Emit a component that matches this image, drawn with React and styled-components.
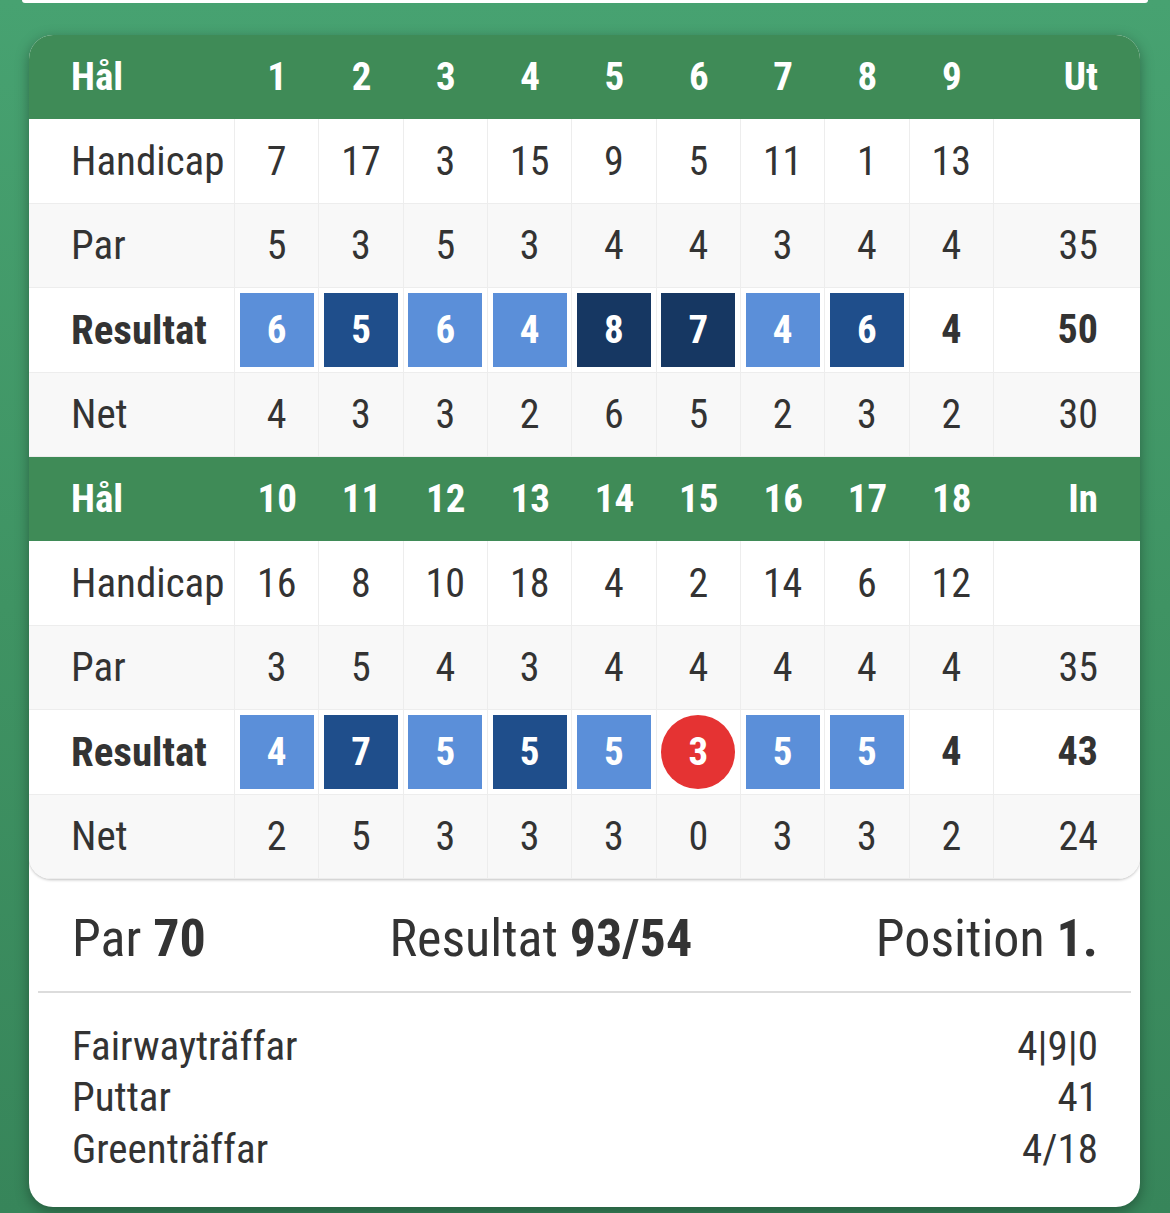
import React from 'react'
import styled, { createGlobalStyle } from 'styled-components'

const front = {
  title: 'Ut',
  holes: [1, 2, 3, 4, 5, 6, 7, 8, 9],
  hcp: [7, 17, 3, 15, 9, 5, 11, 1, 13],
  par: [5, 3, 5, 3, 4, 4, 3, 4, 4],
  res: [6, 5, 6, 4, 8, 7, 4, 6, 4],
  net: [4, 3, 3, 2, 6, 5, 2, 3, 2],
  totals: { par: 35, res: 50, net: 30 },
}

const back = {
  title: 'In',
  holes: [10, 11, 12, 13, 14, 15, 16, 17, 18],
  hcp: [16, 8, 10, 18, 4, 2, 14, 6, 12],
  par: [3, 5, 4, 3, 4, 4, 4, 4, 4],
  res: [4, 7, 5, 5, 5, 3, 5, 5, 4],
  net: [2, 5, 3, 3, 3, 0, 3, 3, 2],
  totals: { par: 35, res: 43, net: 24 },
}

const stats = [
  ['Fairwayträffar', '4|9|0'],
  ['Puttar', '41'],
  ['Greenträffar', '4/18'],
]

const scoreKind = (res, par) => {
  const d = res - par
  if (d < 0) return 'birdie'
  if (d === 0) return 'par'
  if (d === 1) return 'bogey'
  if (d === 2) return 'double'
  return 'worse'
}

const Half = ({ data }) => (
  <>
    <HeadCell label>Hål</HeadCell>
    {data.holes.map((h) => (
      <HeadCell key={h}>{h}</HeadCell>
    ))}
    <HeadCell total>{data.title}</HeadCell>

    <Label>Handicap</Label>
    {data.hcp.map((v, i) => (
      <Cell key={i}>{v}</Cell>
    ))}
    <Cell total />

    <Label shade>Par</Label>
    {data.par.map((v, i) => (
      <Cell shade key={i}>
        {v}
      </Cell>
    ))}
    <Cell shade total>
      {data.totals.par}
    </Cell>

    <Label bold>Resultat</Label>
    {data.res.map((v, i) => {
      const kind = scoreKind(v, data.par[i])
      return (
        <Cell key={i} bold>
          {kind === 'par' ? v : <Score kind={kind}>{v}</Score>}
        </Cell>
      )
    })}
    <Cell total bold>
      {data.totals.res}
    </Cell>

    <Label shade>Net</Label>
    {data.net.map((v, i) => (
      <Cell shade key={i}>
        {v}
      </Cell>
    ))}
    <Cell shade total>
      {data.totals.net}
    </Cell>
  </>
)

const App = () => {
  return (
    <Page>
      <GlobalStyle />
      <TopStrip />
      <Card>
        <Table>
          <Half data={front} />
          <Half data={back} />
        </Table>
        <Summary>
          <SumItem>
            Par <b>70</b>
          </SumItem>
          <SumItem>
            Resultat <b>93/54</b>
          </SumItem>
          <SumItem>
            Position <b>1.</b>
          </SumItem>
        </Summary>
        <Divider />
        <Stats>
          {stats.map(([k, v]) => (
            <StatRow key={k}>
              <span>{k}</span>
              <span>{v}</span>
            </StatRow>
          ))}
        </Stats>
      </Card>
    </Page>
  )
}
export default App

const GlobalStyle = createGlobalStyle`
  html, body {
    margin: 0;
    padding: 0;
  }
  body {
    font-family: 'Roboto Condensed', Roboto, 'Liberation Sans', sans-serif;
    color: #333;
  }
`
const Page = styled.div`
  width: 1170px;
  height: 1213px;
  overflow: hidden;
  background: linear-gradient(180deg, #47a271 0%, #3f9363 50%, #37855a 100%);
  display: flex;
  flex-direction: column;
`
const TopStrip = styled.div`
  height: 3px;
  margin: 0 22px;
  background: #fff;
  border-radius: 0 0 6px 6px;
`
const Card = styled.div`
  margin: 32px 0 0 29px;
  width: 1111px;
  height: 1172px;
  background: #fff;
  border-radius: 24px;
  overflow: hidden;
  box-shadow: 0 4px 14px rgba(0, 0, 0, 0.35);
  display: flex;
  flex-direction: column;
`
const Table = styled.div`
  display: grid;
  grid-template-columns: 206px repeat(9, 84.33px) 1fr;
  grid-auto-rows: 84.4px;
  border-radius: 0 0 22px 22px;
  overflow: hidden;
  box-shadow: 0 1px 3px rgba(0, 0, 0, 0.25);
  font-size: 40px;
`
const HeadCell = styled.div`
  background: #3f8b57;
  color: #fff;
  font-weight: 700;
  font-size: 39px;
  display: flex;
  align-items: center;
  justify-content: ${(p) =>
    p.label ? 'flex-start' : p.total ? 'flex-end' : 'center'};
  padding: ${(p) => (p.label ? '0 0 0 42px' : p.total ? '0 42px 0 0' : '0')};
`
const Label = styled.div`
  display: flex;
  align-items: center;
  padding-left: 42px;
  font-size: 41px;
  font-weight: ${(p) => (p.bold ? 700 : 400)};
  background: ${(p) => (p.shade ? '#f8f8f8' : '#fff')};
  border-bottom: 1px solid #ededed;
  border-right: 1px solid #ededed;
`
const Cell = styled.div`
  display: flex;
  align-items: center;
  justify-content: ${(p) => (p.total ? 'flex-end' : 'center')};
  padding-right: ${(p) => (p.total ? '42px' : '0')};
  font-weight: ${(p) => (p.bold ? 700 : 400)};
  background: ${(p) => (p.shade ? '#f8f8f8' : '#fff')};
  border-bottom: 1px solid #ededed;
  border-right: ${(p) => (p.total ? 'none' : '1px solid #ededed')};
`
const scoreBg = {
  birdie: '#e53333',
  bogey: '#5b8fd9',
  double: '#1f4e8b',
  worse: '#163762',
}
const Score = styled.div`
  width: 74px;
  height: 74px;
  display: flex;
  align-items: center;
  justify-content: center;
  color: #fff;
  font-weight: 700;
  font-size: 39px;
  background: ${(p) => scoreBg[p.kind]};
  border-radius: ${(p) => (p.kind === 'birdie' ? '50%' : '0')};
`
const Summary = styled.div`
  height: 112px;
  box-sizing: border-box;
  padding: 8px 42px 0 43px;
  display: flex;
  align-items: center;
  justify-content: space-between;
  font-size: 52px;
  b {
    font-weight: 700;
  }
`
const SumItem = styled.div``
const Divider = styled.div`
  height: 2px;
  margin: 0 9px;
  background: #dcdcdc;
`
const Stats = styled.div`
  padding: 28px 42px 0 43px;
  font-size: 41px;
`
const StatRow = styled.div`
  display: flex;
  justify-content: space-between;
  line-height: 51.5px;
`
